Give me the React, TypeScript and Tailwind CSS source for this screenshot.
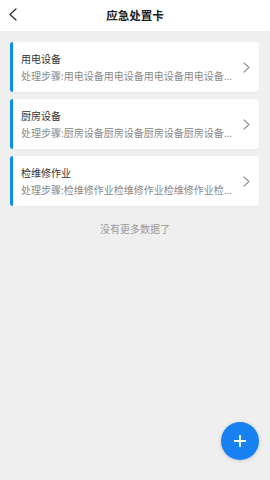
import { Plus } from 'lucide-react';

const CARDS = [
  { title: '用电设备', desc: '处理步骤:用电设备用电设备用电设备用电设备...' },
  { title: '厨房设备', desc: '处理步骤:厨房设备厨房设备厨房设备厨房设备...' },
  { title: '检维修作业', desc: '处理步骤:检维修作业检维修作业检维修作业检...' },
];

const FONT = { fontFamily: '"Noto Sans CJK SC", "Noto Sans", sans-serif' };

function Chevron({ dir, className }: { readonly dir: 'left' | 'right'; readonly className?: string }) {
  const points = dir === 'right' ? '1,1 6,5.5 1,10' : '7,1 1,6.5 7,12';
  const [w, h] = dir === 'right' ? [7, 11] : [8, 13.5];
  return (
    <svg width={w} height={h} viewBox={`0 0 ${w} ${h}`} className={className} fill="none" stroke="currentColor" strokeWidth={1.3} strokeLinecap="round" strokeLinejoin="round">
      <polyline points={points} />
    </svg>
  );
}

function Card({ title, desc }: { readonly title: string; readonly desc: string }) {
  return (
    <li className="flex h-[50px] items-center rounded-[3px] border-l-[3px] border-[#0b8fe3] bg-white pl-[8px] pr-[9px] shadow-[0_1px_2px_rgba(0,0,0,0.03)]">
      <div className="flex min-w-0 flex-1 flex-col gap-[3px]">
        <span className="text-[10px] leading-[14px] text-[#333]">{title}</span>
        <span className="whitespace-nowrap text-[10px] leading-[14px] text-[#8a8a8a]">{desc}</span>
      </div>
      <Chevron dir="right" className="shrink-0 text-[#999]" />
    </li>
  );
}

export default function App() {
  return (
    <div className="relative flex h-[480px] w-[270px] flex-col overflow-hidden bg-[#efefef]" style={FONT}>
      <header className="relative flex h-[31px] shrink-0 items-center justify-center bg-white">
        <Chevron dir="left" className="absolute left-[9px] top-[8px] text-[#333]" />
        <h1 className="text-[11.5px] font-bold text-[#222]">应急处置卡</h1>
      </header>
      <ul className="mx-[10px] mt-[11px] flex w-[249px] flex-col gap-[7px]">
        {CARDS.map((c) => <Card key={c.title} {...c} />)}
      </ul>
      <p className="mt-[16px] text-center text-[10px] leading-[14px] text-[#999]">没有更多数据了</p>
      <button
        type="button"
        className="absolute left-[221px] top-[422px] flex size-[38px] items-center justify-center rounded-full bg-[#1781f2] shadow-[0_1px_4px_rgba(0,0,0,0.15)]"
      >
        <Plus size={18} strokeWidth={2.4} className="text-white" />
      </button>
    </div>
  );
}
